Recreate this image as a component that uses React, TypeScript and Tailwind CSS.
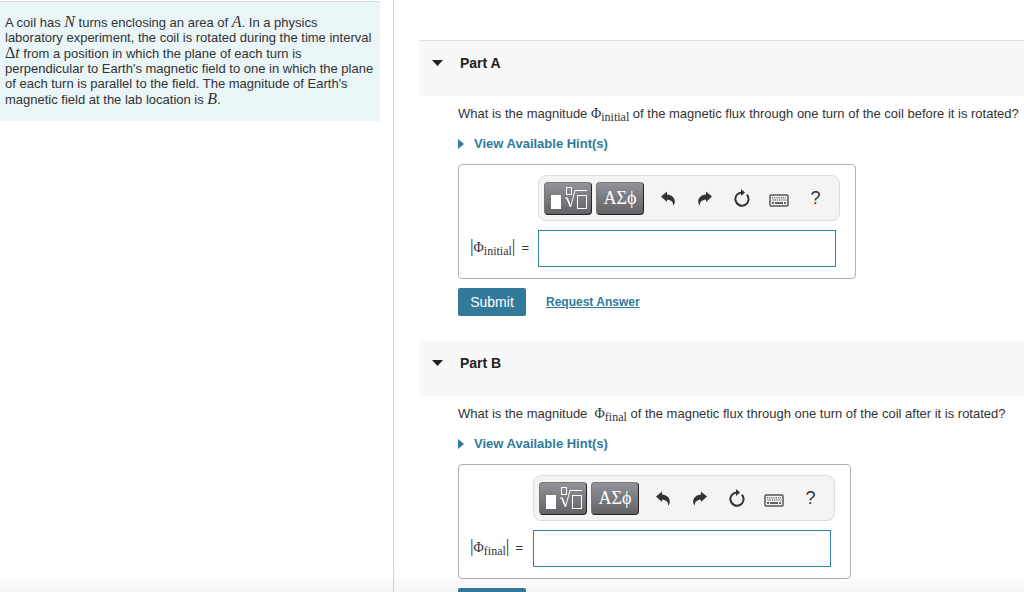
import { useState } from 'react'
import type { ReactNode } from 'react'

type PartProps = {
  id:         string
  title:      string
  symbol:     string
  before:     string
  after:      string
  labelWidth: string
  bordered?:  boolean
}

function MathVar({ children }: { children: ReactNode }) {
  return <i className="font-['Liberation_Serif',serif] text-base leading-[15px]">{children}</i>
}

/* Phi with a roman subscript */
function Phi({ sub }: { sub: string }) {
  return (
    <span className="font-['Liberation_Serif',serif] text-sm leading-none">
      Φ<sub className="text-xs leading-none">{sub}</sub>
    </span>
  )
}

function Bar() {
  return <span className="font-['Liberation_Serif',serif] text-lg leading-none">|</span>
}

function TemplatesIcon() {
  return (
    <svg width="38" height="24" viewBox="0 0 38 24" fill="none" stroke="#fff" className="shrink-0" aria-hidden="true">
      <rect x="2" y="9" width="10" height="14" fill="#fff" stroke="none" />
      <rect x="17.5" y="1.5" width="5" height="7" />
      <path d="M16 12.5l2-1 3.500 9.500L26 4.500h12.500" />
      <path d="M18 12l3.300 8" strokeWidth="1.600" />
      <rect x="28.500" y="9.500" width="9" height="13" />
    </svg>
  )
}

function UndoIcon() {
  return (
    <svg width="14" height="15" viewBox="0 0 14 14" fill="#333" aria-hidden="true">
      <path d="M0 5L6 0v3.100c4.500.300 7.800 3 7.800 7.200 0 1.500-.600 2.700-1.800 3.700.4-3.800-1.700-5.700-6-5.800V10.500z" />
    </svg>
  )
}

function RedoIcon() {
  return (
    <svg width="14" height="15" viewBox="0 0 14 14" fill="#333" aria-hidden="true">
      <path d="M14 5L8 0v3.100C3.500 3.400.2 6.100.2 10.300c0 1.500.6 2.700 1.800 3.700-.4-3.800 1.700-5.700 6-5.800V10.500z" />
    </svg>
  )
}

function ResetIcon() {
  return (
    <svg width="16" height="18" viewBox="0 0 16 18" fill="none" aria-hidden="true">
      <path d="M8.500 3.500A6.600 6.600 0 1 0 12.900 5.700" stroke="#333" strokeWidth="2" />
      <path d="M7 0l4 3.500-4 3.500z" fill="#333" />
    </svg>
  )
}

function KeyboardIcon() {
  return (
    <svg width="20" height="13" viewBox="0 0 20 13" fill="none" stroke="#333" aria-hidden="true">
      <rect x="1" y="1" width="18" height="11" rx="1" stroke="#555" strokeWidth="1.500" />
      <path d="M3 3.800h14" strokeDasharray="1.200 1" />
      <path d="M3.500 6h14" strokeDasharray="1.200 1" />
      <path d="M3 9h2M6 9h8M15 9h2" strokeWidth="1.300" />
    </svg>
  )
}

const darkButton =
  'flex h-[33px] w-12 items-center justify-center rounded border border-[#777] border-r-[#222] border-b-[#222] bg-linear-to-b from-[#92929a] to-[#626266] text-white'
const toolButton = 'flex h-8 w-[37px] items-center justify-center text-[#333]'

function Toolbar() {
  return (
    <div className="flex h-[46px] items-center rounded-lg border border-[#ddd] bg-[#f4f4f4] px-[5px]">
      <button type="button" aria-label="Templates" className={darkButton}><TemplatesIcon /></button>
      <button type="button" aria-label="Symbols" className={`${darkButton} ml-1 font-['Liberation_Serif',serif] text-lg`}>
        ΑΣϕ
      </button>
      <div className="ml-[5px] flex">
        <button type="button" aria-label="Undo" className={toolButton}><UndoIcon /></button>
        <button type="button" aria-label="Redo" className={toolButton}><RedoIcon /></button>
        <button type="button" aria-label="Reset" className={toolButton}><ResetIcon /></button>
        <button type="button" aria-label="Keyboard shortcuts" className={`${toolButton} pt-1`}><KeyboardIcon /></button>
        <button type="button" aria-label="Help" className={`${toolButton} text-lg`}>?</button>
      </div>
    </div>
  )
}

function Part({ id, title, symbol, before, after, labelWidth, bordered }: PartProps) {
  const [open,   setOpen]   = useState(true)
  const [answer, setAnswer] = useState('')

  return (
    <section className="pb-[25px]">
      <h2 className={`bg-[#f8f8f8] pb-[23px] ${bordered ? 'border-t border-[#ddd]' : ''}`}>
        <button
          type="button"
          aria-expanded={open}
          onClick={() => setOpen(!open)}
          className="flex items-center gap-[17px] pt-3 pl-[13px] text-sm font-bold text-[#222]"
        >
          <svg width="11" height="6" viewBox="0 0 11 6" fill="#222" aria-hidden="true"><path d="M0 0h11L5.500 6z" /></svg>
          {title}
        </button>
      </h2>

      {open && (
        <div className="pl-[39px]">
          <p className="pt-2 leading-5 whitespace-nowrap">{before} <Phi sub={symbol} /> {after}</p>

          <button type="button" className="mt-2.5 flex items-center gap-2.5 leading-5 font-bold text-[#2f7a9a]">
            <svg width="6" height="10" viewBox="0 0 6 10" fill="currentColor" aria-hidden="true"><path d="M0 0l6 5-6 5z" /></svg>
            View Available Hint(s)
          </button>

          {/* Answer box */}
          <div className="mt-2.5 flex h-[115px] w-fit rounded border border-[#b0b0b0] pt-2.5 pr-[15px] pl-[11px]">
            <label htmlFor={id} className={`mt-[62px] flex items-baseline whitespace-nowrap ${labelWidth}`}>
              <Bar /><Phi sub={symbol} /><Bar />
              <span className="ml-1.5">=</span>
            </label>
            <div>
              <Toolbar />
              <input
                id={id}
                type="text"
                value={answer}
                onChange={e => setAnswer(e.target.value)}
                className="mt-[9px] block h-[37px] w-[298px] border border-[#3182a8] bg-white px-2 outline-none"
              />
            </div>
          </div>

          <div className="mt-[9px] flex items-center gap-5">
            <button type="submit" className="h-7 w-[68px] rounded-xs bg-[#33799a] text-sm text-white">Submit</button>
            <a href="#request" className="text-xs font-bold text-[#2f7a9a] underline">Request Answer</a>
          </div>
        </div>
      )}
    </section>
  )
}

export default function App() {
  return (
    <div className="flex h-screen overflow-hidden bg-[linear-gradient(to_top,#f5f5f5,#ffffff_20px)] font-['Liberation_Sans',Arial,sans-serif] text-[13px] text-[#333]">
      <aside className="w-[394px] shrink-0 border-r border-[#ccd3dc] pt-px pr-[13px]">
        <p className="border-t border-[#d8dcdd] bg-[#e9f5f7] pt-3 pr-1 pb-3.5 pl-[5px] leading-[15px]">
          A coil has <MathVar>N</MathVar> turns enclosing an area of <MathVar>A</MathVar>. In a physics
          laboratory experiment, the coil is rotated during the time interval{' '}
          <span className="font-['Liberation_Serif',serif] text-base leading-[15px]">Δ</span><MathVar>t</MathVar> from
          a position in which the plane of each turn is perpendicular to Earth's magnetic field to one in
          which the plane of each turn is parallel to the field. The magnitude of Earth's magnetic field at
          the lab location is <MathVar>B</MathVar>.
        </p>
      </aside>

      <main className="min-w-0 flex-1 overflow-hidden pt-10 pl-[25px]">
        <Part
          id="flux-initial"
          title="Part A"
          symbol="initial"
          before="What is the magnitude"
          after="of the magnetic flux through one turn of the coil before it is rotated?"
          labelWidth="w-[68px]"
          bordered
        />
        <Part
          id="flux-final"
          title="Part B"
          symbol="final"
          before={'What is the magnitude\u00a0'}
          after="of the magnetic flux through one turn of the coil after it is rotated?"
          labelWidth="w-[63px]"
        />
      </main>
    </div>
  )
}
